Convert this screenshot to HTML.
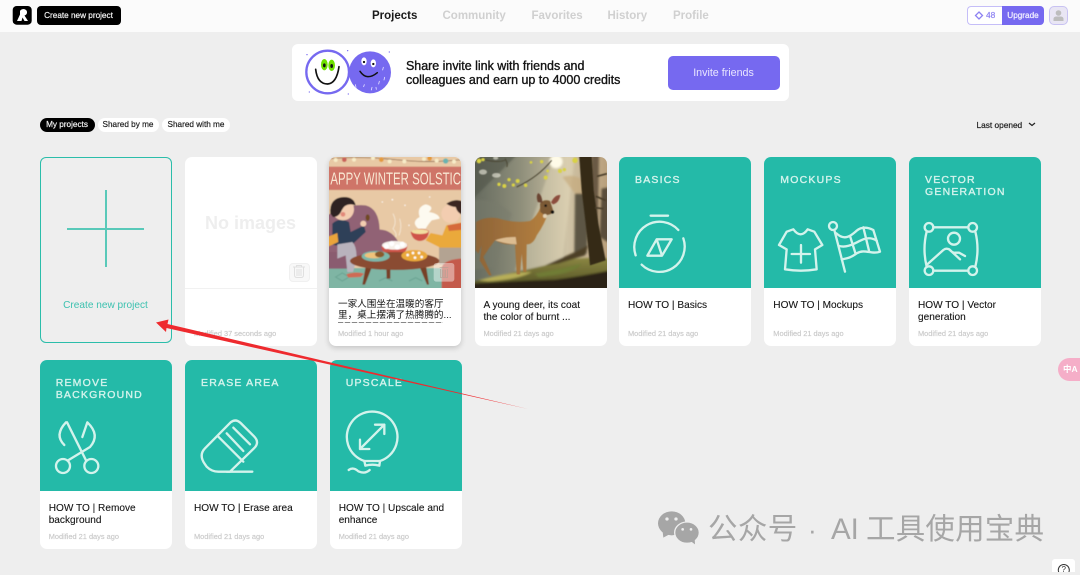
<!DOCTYPE html>
<html style="background:#eeeeee"><head><meta charset="utf-8"><style>
*{box-sizing:border-box}
html,body{margin:0;padding:0}
body{width:1080px;height:572px;overflow:hidden;background:#eeeeee;position:relative;font-family:"Liberation Sans","Noto Sans CJK SC",sans-serif;color:#111}
.a{position:absolute;white-space:nowrap}
.card{position:absolute;width:132px;height:189px;background:#fff;border-radius:7px;overflow:hidden}
.card .img{position:absolute;left:0;top:0;width:100%;height:131px;background:#24baa8}
.h{position:absolute;left:16px;top:16.500px;font-size:10.500px;line-height:12px;-webkit-text-stroke:.35px #d3f3ec;letter-spacing:1.200px;color:#d3f3ec;white-space:nowrap}
.t{position:absolute;left:9px;top:143px;font-size:10.100px;line-height:11.500px;color:#151515;white-space:nowrap;-webkit-text-stroke:.1px #151515}
.m{position:absolute;left:9px;top:171.500px;font-size:7.400px;line-height:9px;color:#c9c9c9;-webkit-text-stroke:.15px #c9c9c9;white-space:nowrap}
.nav{top:9px;font-size:11.500px;line-height:14px;font-weight:700;color:#d0d0d0}
.pill{top:117.500px;height:14px;border-radius:7px;background:#fff;font-size:8.200px;line-height:14px;text-align:center;color:#222;-webkit-text-stroke:.2px #222}
svg{position:absolute;left:0;top:0}
svg.full{width:1080px;height:572px;pointer-events:none}
</style></head><body>
<div class="a" style="left:0;top:0;width:1080px;height:572px;background:#eeeeee"></div>
<div class="a" style="left:0;top:0;width:1080px;height:32px;background:#fbfbfb"></div>
<svg class="full" viewBox="0 0 1080 572" style="z-index:1">
<rect x="12.700" y="6" width="19" height="18.700" rx="4" fill="#000"/>
<path d="M17 21L20 14.500V11Q21 9 24 9Q27.500 10 27 13Q26.500 15 24.500 15.500L28 21H24.500L22.500 17.500L21.500 21Z" fill="#fff"/>
</svg>
<div class="a" style="left:36.500px;top:6px;width:84px;height:19px;background:#000;border-radius:4px;color:#f2f2f2;font-size:8.200px;line-height:19px;text-align:center;-webkit-text-stroke:.2px #f2f2f2;z-index:1">Create new project</div>

<div class="a nav" style="left:372px;color:#1a1a1a">Projects</div>
<div class="a nav" style="left:442.500px">Community</div>
<div class="a nav" style="left:531.500px">Favorites</div>
<div class="a nav" style="left:607.500px">History</div>
<div class="a nav" style="left:673px">Profile</div>

<div class="a" style="left:967px;top:6px;width:36px;height:19px;background:#fff;border:1px solid #c5bef8;border-right:0;border-radius:4px 0 0 4px"></div>
<svg class="full" viewBox="0 0 1080 572" style="z-index:1">
<path d="M979 12L982.500 15.500L979 19L975.500 15.500Z" fill="none" stroke="#8d82f2" stroke-width="1.300"/>
</svg>
<div class="a" style="left:986px;top:6px;font-size:8.400px;line-height:19px;color:#8d82f2;-webkit-text-stroke:.2px #8d82f2;z-index:1">48</div>
<div class="a" style="left:1002px;top:6px;width:42px;height:19px;background:#7669f0;border-radius:0 4px 4px 0;color:#f0eeff;font-size:8.200px;line-height:19px;text-align:center;-webkit-text-stroke:.25px #f0eeff">Upgrade</div>
<div class="a" style="left:1049px;top:6px;width:19px;height:19px;background:#e9e6f4;border:1px solid #c8c2f2;border-radius:5px"></div>
<svg class="full" viewBox="0 0 1080 572" style="z-index:1">
<circle cx="1058.500" cy="13" r="2.800" fill="#bdbdbd"/>
<path d="M1053.500 21V18.500Q1054 16.500 1056.500 16.500H1060.500Q1063 16.500 1063.500 18.500V21Z" fill="#bdbdbd"/>
</svg>

<div class="a" style="left:291.500px;top:44px;width:497.500px;height:57px;background:#fff;border-radius:6px"></div>
<svg class="full" viewBox="0 0 1080 572" style="z-index:1">
<g transform="translate(296,44) scale(.3333)">
<circle cx="95" cy="84" r="64" fill="#fff" stroke="#7669f0" stroke-width="7"/>
<circle cx="222" cy="85" r="63" fill="#7669f0"/>
<ellipse cx="85" cy="62" rx="10" ry="17" fill="#6fe000"/><ellipse cx="107" cy="64" rx="10" ry="17" fill="#6fe000"/>
<ellipse cx="85" cy="64" rx="4" ry="6" fill="#111"/><ellipse cx="107" cy="66" rx="4" ry="6" fill="#111"/>
<path d="M59 76Q64 120 95 120Q122 118 129 68" fill="none" stroke="#111" stroke-width="5" stroke-linecap="round"/>
<ellipse cx="204" cy="52" rx="8" ry="12" fill="#fff"/><ellipse cx="232" cy="58" rx="8" ry="12" fill="#fff"/>
<circle cx="204" cy="54" r="3.500" fill="#111"/><circle cx="232" cy="60" r="3.500" fill="#111"/>
<path d="M192 82Q212 112 244 86" fill="none" stroke="#111" stroke-width="4.500" stroke-linecap="round"/>
<g stroke="#e4e0ff" stroke-width="2.500" stroke-linecap="round"><path d="M262 70l-2 8M266 100l-2 8M250 112l-2 8M228 130l-2 8M205 122l-2 6M178 122l2 8M240 130l1 6"/></g>
<g fill="#7669f0"><circle cx="33" cy="32" r="2"/><circle cx="155" cy="20" r="2"/><circle cx="40" cy="144" r="2"/><circle cx="157" cy="150" r="2"/><circle cx="280" cy="24" r="2"/></g>
</g></svg>
<div class="a" style="left:406px;top:59px;font-size:12.450px;line-height:14px;color:#141414;-webkit-text-stroke:.35px #141414;z-index:1">Share invite link with friends and<br>colleagues and earn up to 4000 credits</div>
<div class="a" style="left:667.500px;top:56px;width:112px;height:33.500px;background:#7669f0;border-radius:5px;color:#e9e6ff;font-size:10.700px;line-height:34.500px;text-align:center;z-index:1">Invite friends</div>

<div class="a pill" style="left:39.500px;width:55px;background:#000;color:#f0f0f0;-webkit-text-stroke:.2px #f0f0f0">My projects</div>
<div class="a pill" style="left:97.500px;width:61px">Shared by me</div>
<div class="a pill" style="left:162px;width:68px">Shared with me</div>
<div class="a" style="left:976.500px;top:117.500px;font-size:8.300px;line-height:14px;color:#222;-webkit-text-stroke:.2px #222">Last opened</div>
<svg class="full" viewBox="0 0 1080 572"><path d="M1029 123L1032 125.500L1035 123" fill="none" stroke="#222" stroke-width="1.200"/></svg>

<!-- create -->
<div class="a" style="left:39.500px;top:157px;width:132px;height:186px;border:1.300px solid #2bbdaa;border-radius:6px"></div>
<div class="a" style="left:67px;top:228.300px;width:77px;height:1.600px;background:#59c9b9"></div>
<div class="a" style="left:105.200px;top:190px;width:1.600px;height:77px;background:#59c9b9"></div>
<div class="a" style="left:39.500px;top:300px;width:132px;text-align:center;font-size:10.100px;line-height:12px;color:#3cc1af">Create new project</div>

<!-- empty -->
<div class="card" style="left:185px;top:157.300px">
<div class="a" style="left:0;top:130.500px;width:132px;height:1px;background:#f1f1f1"></div>
<div class="a" style="left:0;top:55px;width:131px;text-align:center;font-size:18px;line-height:22px;font-weight:700;color:#eeeeee">No images</div>
<div class="a" style="left:103.500px;top:105.500px;width:21px;height:19px;background:#f8f8f8;border:1px solid #f0f0f0;border-radius:4px"></div>
<svg width="132" height="131" viewBox="0 0 132 131"><path d="M108 110H120M109.500 110V118Q109.500 120.500 112 120.500H116Q118.500 120.500 118.500 118V110M112 112V119M114 112V119M116 112V119M111.500 110V108.500H116.500V110" fill="none" stroke="#e0e0e0" stroke-width="1"/></svg>
<div class="m">Modified 37 seconds ago</div>
</div>

<!-- solstice -->
<div class="card" style="left:329px;top:157.300px;box-shadow:0 2px 6px rgba(0,0,0,.18)">
<div class="img" style="background:#e8c9a5"></div>
<svg width="132" height="131" viewBox="0 0 396 393">
<defs><filter id="b1" x="-5%" y="-5%" width="110%" height="110%"><feGaussianBlur stdDeviation="1.600"/></filter></defs>
<g filter="url(#b1)">
<rect x="-10" y="-10" width="416" height="413" fill="#e8c9a5"/>
<path d="M0 5Q100 -3 200 8T396 8" fill="none" stroke="#7d5a40" stroke-width="2"/>
<g fill="#f7ecc8"><circle cx="20" cy="9" r="6"/><circle cx="75" cy="8" r="6"/><circle cx="132" cy="3" r="6"/><circle cx="182" cy="13" r="6"/><circle cx="226" cy="13" r="6"/><circle cx="285" cy="6" r="6"/><circle cx="323" cy="11" r="6"/><circle cx="375" cy="14" r="6"/></g>
<circle cx="46" cy="8" r="7" fill="#c9625a"/><circle cx="157" cy="8" r="7" fill="#e39a3d"/><circle cx="302" cy="4" r="7" fill="#e39a3d"/><circle cx="350" cy="12" r="8" fill="#6bb3b0"/>
<rect x="-10" y="29" width="416" height="70" fill="#cf7568"/>
<rect x="-10" y="333" width="416" height="70" fill="#7fb5a4"/>
<path d="M20 360l20-12 20 12-20 12zM150 372l20-10 20 10M240 372l20-10 20 10" fill="none" stroke="#6aa392" stroke-width="3"/>
<path d="M-10 178Q50 140 110 145Q150 155 152 218Q190 218 212 262V285L-10 312Z" fill="#916274"/>
<rect x="-10" y="285" width="80" height="50" fill="#8a5c6f"/>
<path d="M10 200Q30 180 60 195L65 225L105 205L110 225L70 262Q30 270 10 262Z" fill="#2d4158"/>
<path d="M-5 240L25 228L28 255L-5 270Z" fill="#eaa43a"/>
<path d="M25 262L70 255Q85 270 82 310L72 345H55L50 295L25 305Z" fill="#b9b3bd"/>
<path d="M52 352Q80 342 105 350L95 360L58 362Z" fill="#cf6a54"/>
<circle cx="42" cy="157" r="33" fill="#f3cdb0"/>
<path d="M4 170Q0 122 45 120Q75 120 80 145Q50 135 38 160Q30 180 12 180Z" fill="#2e2320"/>
<circle cx="42" cy="172" r="7" fill="#e2897a"/>
<circle cx="103" cy="200" r="9" fill="#f3cdb0"/><ellipse cx="116" cy="182" rx="6" ry="10" fill="#6f4a22"/>
<path d="M405 195L352 205L340 235L305 228L290 250L330 270L335 300L405 310Z" fill="#eaa93a"/>
<path d="M355 205L405 196V218L360 222Z" fill="#d66a3a"/>
<circle cx="365" cy="170" r="28" fill="#f3cdb0"/>
<path d="M352 140Q380 122 405 135V175Q385 170 380 150Q365 150 352 140Z" fill="#3a2722"/>
<rect x="330" y="272" width="76" height="50" fill="#b3a392"/>
<path d="M338 330Q350 305 405 305V403H338Z" fill="#c45a4c"/>
<path d="M245 225Q275 208 300 222Q298 250 272 252Q250 250 245 225Z" fill="#cf5248"/>
<ellipse cx="273" cy="224" rx="25" ry="7" fill="#f2dda0"/>
<path d="M268 215Q245 195 272 180Q262 150 290 142Q318 148 300 165Q330 170 332 185L308 190Q295 205 290 215Z" fill="#fdfaf0"/>
<path d="M192 170Q205 195 192 215Q205 230 200 240M212 185Q220 210 210 235" fill="none" stroke="#f8efe0" stroke-width="2"/>
<path d="M157 268L236 262Q232 298 197 300Q162 298 157 268Z" fill="#cf5248"/>
<ellipse cx="197" cy="265" rx="38" ry="13" fill="#f6f1ea"/>
<g fill="#fff"><circle cx="172" cy="268" r="8"/><circle cx="188" cy="260" r="8"/><circle cx="205" cy="270" r="8"/><circle cx="220" cy="262" r="8"/></g>
<path d="M110 330L128 332L108 383L100 383Z" fill="#774028"/>
<path d="M172 335H184V365H173Z" fill="#774028"/>
<path d="M272 330L292 332L300 383H294Z" fill="#774028"/>
<ellipse cx="197" cy="312" rx="134" ry="27" fill="#8a4c33"/>
<ellipse cx="140" cy="298" rx="42" ry="16" fill="#7db7a9"/><ellipse cx="135" cy="295" rx="28" ry="9" fill="#efc27a"/><ellipse cx="152" cy="292" rx="14" ry="9" fill="#8a5a2c"/>
<ellipse cx="256" cy="296" rx="39" ry="17" fill="#eaa93a"/>
<g fill="#fff"><circle cx="236" cy="294" r="4"/><circle cx="252" cy="288" r="4"/><circle cx="270" cy="288" r="4"/><circle cx="258" cy="302" r="4"/><circle cx="278" cy="300" r="4"/></g>
<g fill="#fff"><circle cx="190" cy="128" r="2.500"/><circle cx="228" cy="145" r="2"/><circle cx="302" cy="120" r="2"/><circle cx="240" cy="205" r="2"/><circle cx="160" cy="135" r="2"/></g>
</g>
<text x="4" y="83" font-size="52" fill="#f8e7d2" font-family="Liberation Sans,sans-serif" textLength="392" lengthAdjust="spacingAndGlyphs">APPY WINTER SOLSTIC</text>
<rect x="314" y="318" width="62" height="56" rx="8" fill="#fff" fill-opacity=".42"/>
<path d="M332 332H358M335 336V362H355V336M341 338V360M345 338V360M349 338V360" fill="none" stroke="#b6a094" stroke-width="2"/>
</svg>
<div class="t" style="top:141.500px;font-size:9.600px;height:23px;overflow:hidden;-webkit-text-stroke:0">一家人围坐在温暖的客厅<br>里，桌上摆满了热腾腾的...</div>
<div class="a" style="left:9px;top:165px;height:.8px;width:105px;overflow:hidden;background:repeating-linear-gradient(90deg,#888 0 5px,#e4e4e4 5px 7px)"></div>
<div class="m">Modified 1 hour ago</div>
</div>

<!-- deer -->
<div class="card" style="left:474.500px;top:157.300px">
<svg width="132" height="131" viewBox="0 0 396 393">
<defs>
<filter id="b2" x="-5%" y="-5%" width="110%" height="110%"><feGaussianBlur stdDeviation="3"/></filter>
<filter id="b3" x="-5%" y="-5%" width="110%" height="110%"><feGaussianBlur stdDeviation="1.500"/></filter>
<linearGradient id="bg" x1="0" y1="0" x2="1" y2="0"><stop offset="0" stop-color="#666b5f"/><stop offset=".35" stop-color="#8f8f7b"/><stop offset=".7" stop-color="#cfc3a6"/><stop offset="1" stop-color="#b9a07c"/></linearGradient>
<linearGradient id="gr" x1="0" y1="0" x2="0" y2="1"><stop offset="0" stop-color="#8b8642"/><stop offset="1" stop-color="#4a4a20"/></linearGradient>
<linearGradient id="dr" x1="0" y1="0" x2="1" y2="0"><stop offset="0" stop-color="#8e6438"/><stop offset="1" stop-color="#b5803f"/></linearGradient>
</defs>
<rect width="396" height="393" fill="url(#bg)"/>
<g filter="url(#b2)">
<path d="M-10 -10H130L-10 130Z" fill="#4c5146" opacity=".55"/>
<path d="M-10 130Q60 120 110 170L60 330L-10 340Z" fill="#777a6c" opacity=".5"/>
<path d="M240 -10L300 -10L260 330L120 340Z" fill="#e9dfc0" opacity=".38"/>
<circle cx="243" cy="14" r="20" fill="#fffbe8"/>
<path d="M262 60Q320 40 370 120L330 150Z" fill="#c5a776" opacity=".6"/>
<path d="M300 110H345L335 290H298Z" fill="#5d5645"/>
<path d="M350 -10H372L368 230L345 240Z" fill="#6a5a44"/>
<path d="M380 95L406 90V260L374 240Z" fill="#5a4e3a"/>
<path d="M-10 375Q100 350 210 325Q290 295 406 305V403H-10Z" fill="url(#gr)"/>
<path d="M210 325L300 285L340 265L330 295L250 320Z" fill="#4d3f25"/>
<path d="M-10 380Q120 372 240 368Q320 358 406 340V403H-10Z" fill="#2c2213"/>
<path d="M10 370Q100 345 170 345Q130 368 40 373Z" fill="#b7ae58"/>
<path d="M180 350Q260 335 320 320Q300 352 190 360Z" fill="#6f7b34"/>
</g>
<g filter="url(#b3)">
<path d="M312 -10H350L356 100L370 200L392 310L345 325L332 200L320 100Z" fill="#352c19"/>
<path d="M366 58L396 50M362 118L392 130M360 152L385 155" stroke="#4a3e2a" stroke-width="5" fill="none"/>
<path d="M3 195Q30 178 70 184Q120 200 165 192Q185 180 197 150L222 160Q210 200 185 235Q175 262 155 262L154 345H145L140 290L135 352H125L120 262Q85 265 60 250Q40 275 25 300L50 355H42L14 310L20 265L10 290L2 280Z" fill="url(#dr)"/>
<path d="M60 250Q100 262 125 262L122 240Q85 240 60 250Z" fill="#dcbc90"/>
<path d="M195 140Q205 125 225 132L236 165L225 172L210 175L196 165Z" fill="#7c5a36"/>
<path d="M188 135Q182 115 190 108Q202 115 202 138Z" fill="#6a4532"/>
<path d="M228 136Q240 112 256 114Q252 138 234 142Z" fill="#8c4e3e"/>
<circle cx="212" cy="146" r="4" fill="#111"/><circle cx="232" cy="165" r="5" fill="#111"/>
<ellipse cx="210" cy="177" rx="6" ry="6" fill="#e4d3b4"/>
<path d="M0 0Q60 20 90 10M90 5Q100 20 95 30M125 90Q190 60 230 10" fill="none" stroke="#4b4634" stroke-width="3"/>
<g fill="#d9d245"><circle cx="12" cy="12" r="7"/><circle cx="24" cy="8" r="5"/><circle cx="72" cy="82" r="5"/><circle cx="88" cy="87" r="6"/><circle cx="102" cy="68" r="5"/><circle cx="115" cy="84" r="5"/><circle cx="128" cy="72" r="6"/><circle cx="152" cy="85" r="5"/><circle cx="200" cy="14" r="5"/><circle cx="212" cy="62" r="6"/><circle cx="218" cy="42" r="4"/><circle cx="255" cy="42" r="6"/><circle cx="268" cy="38" r="5"/><circle cx="300" cy="10" r="8"/><circle cx="168" cy="16" r="4"/></g>
<g fill="#f2f0e2" opacity=".6"><ellipse cx="24" cy="45" rx="12" ry="8"/><ellipse cx="64" cy="55" rx="13" ry="7"/><ellipse cx="62" cy="3" rx="8" ry="5"/></g>
</g>
</svg>
<div class="t">A young deer, its coat<br>the color of burnt ...</div>
<div class="m">Modified 21 days ago</div>
</div>

<!-- how-to row 1 -->
<div class="card" style="left:619px;top:157.300px"><div class="img"></div><div class="h">BASICS</div><div class="t">HOW TO | Basics</div><div class="m">Modified 21 days ago</div></div>
<div class="card" style="left:764.300px;top:157.300px"><div class="img"></div><div class="h">MOCKUPS</div><div class="t">HOW TO | Mockups</div><div class="m">Modified 21 days ago</div></div>
<div class="card" style="left:909px;top:157.300px"><div class="img"></div><div class="h">VECTOR<br>GENERATION</div><div class="t">HOW TO | Vector<br>generation</div><div class="m">Modified 21 days ago</div></div>
<!-- row 2 -->
<div class="card" style="left:39.700px;top:360px"><div class="img"></div><div class="h">REMOVE<br>BACKGROUND</div><div class="t">HOW TO | Remove<br>background</div><div class="m">Modified 21 days ago</div></div>
<div class="card" style="left:185px;top:360px"><div class="img"></div><div class="h">ERASE AREA</div><div class="t">HOW TO | Erase area</div><div class="m">Modified 21 days ago</div></div>
<div class="card" style="left:329.700px;top:360px"><div class="img"></div><div class="h">UPSCALE</div><div class="t">HOW TO | Upscale and<br>enhance</div><div class="m">Modified 21 days ago</div></div>

<svg class="full" viewBox="0 0 1080 572" style="z-index:2">
<g transform="translate(615,150) scale(.33333)" fill="none" stroke="#d3f3ec" stroke-width="7" stroke-linecap="round" stroke-linejoin="round">
<!-- basics -->
<path d="M107 197H159"/>
<path d="M190 240A76 76 0 0 0 62 316"/>
<path d="M80 344A76 76 0 0 0 205 265"/>
<path d="M97 317L125 268H170L141 317ZM125 268L141 317"/>
<!-- shirt -->
<path d="M535 238L515 245L492 285L515 298L510 358Q558 366 605 358L600 298L622 285L598 245L578 238Q557 268 535 238Z"/>
<path d="M530 312H585M558 285V338"/>
<!-- flag -->
<circle cx="654" cy="228" r="12"/>
<path d="M658 240L690 365"/>
<path d="M664 250C690 275 710 255 725 242C745 226 765 235 775 240L795 305C770 315 750 295 725 310C705 325 695 325 680 328"/>
<path d="M705 258L722 312M745 232L762 302M672 288C700 295 720 278 745 268C760 262 775 265 785 272"/>
<!-- vector -->
<circle cx="942" cy="232" r="13"/><circle cx="1073" cy="232" r="13"/><circle cx="942" cy="362" r="13"/><circle cx="1073" cy="362" r="13"/>
<path d="M955 232H1060M955 362H1060M935 245Q922 297 935 350M1081 245Q1094 297 1081 350"/>
<circle cx="1017" cy="266" r="18"/>
<path d="M938 342L985 300Q995 292 1005 300L1035 328M1003 298Q1012 310 1022 308H1032L1050 318"/>
</g>
<g transform="translate(30,355) scale(.33333)" fill="none" stroke="#d3f3ec" stroke-width="7" stroke-linecap="round" stroke-linejoin="round">
<!-- scissors -->
<circle cx="99" cy="333" r="21"/><circle cx="184" cy="333" r="21"/>
<path d="M111 202L168 316M108 202Q72 240 103 270"/>
<path d="M157 246L172 202Q212 240 180 276L114 316"/>
<!-- eraser -->
<path d="M602 202Q617 190 632 204L672 244Q690 262 672 280L600 350H565Q545 350 530 335L525 328Q505 300 525 280Z"/>
<path d="M565 245L640 320M590 235L640 288M610 218L660 268M590 350H667"/>
<!-- balloon -->
<path d="M1003 318A76 76 0 1 1 1050 318"/>
<path d="M1003 318H1050L1048 332Q1027 326 1006 332Z"/>
<path d="M990 282L1063 209M1035 209H1063V237M990 254V282H1018"/>
<path d="M956 345Q970 335 985 349Q1005 358 1019 345"/>
</g>
<!-- red arrow -->
<polygon points="156,322.500 168.500,319.500 167.500,324 528,409 166.500,328 166,332" fill="#ee2a2e"/>
<!-- wechat icon -->
<g transform="translate(640,350) scale(.33333)" fill="#a6a6a6">
<ellipse cx="95" cy="520" rx="41" ry="36"/><path d="M68 545L70 563L90 552Z"/>
<ellipse cx="141" cy="548" rx="37" ry="32" stroke="#eeeeee" stroke-width="4"/><path d="M150 572L165 583L164 565Z"/>
<g fill="#eeeeee"><circle cx="81" cy="507" r="5"/><circle cx="108" cy="507" r="5"/><circle cx="128" cy="538" r="4"/><circle cx="153" cy="538" r="4"/></g>
</g>
</svg>

<div class="a" style="left:708px;top:511px;font-size:29.500px;line-height:38px;color:#a6a6a6;letter-spacing:.4px;z-index:2">公众号</div>
<div class="a" style="left:808px;top:511px;font-size:26px;line-height:38px;color:#a6a6a6;z-index:2">·</div>
<div class="a" style="left:831px;top:511px;font-size:29.500px;line-height:38px;color:#a6a6a6;z-index:2">AI</div>
<div class="a" style="left:866px;top:511px;font-size:29.500px;line-height:38px;color:#a6a6a6;letter-spacing:.2px;z-index:2">工具使用宝典</div>

<div class="a" style="left:1058px;top:358px;width:24px;height:23px;border-radius:12px 0 0 12px;background:#f5aec8;color:#fff;font-size:8.500px;line-height:23px;padding-left:5px;font-weight:700;z-index:2">中A</div>

<div class="a" style="left:1052px;top:559px;width:23px;height:13px;background:#fff;border-radius:3px 3px 0 0;z-index:2"></div>
<svg class="full" viewBox="0 0 1080 572" style="z-index:2"><circle cx="1063.800" cy="570" r="5.500" fill="none" stroke="#333" stroke-width="1"/></svg>
<div class="a" style="left:1061.500px;top:565px;font-size:8px;line-height:10px;color:#333;z-index:3">?</div>
</body></html>
